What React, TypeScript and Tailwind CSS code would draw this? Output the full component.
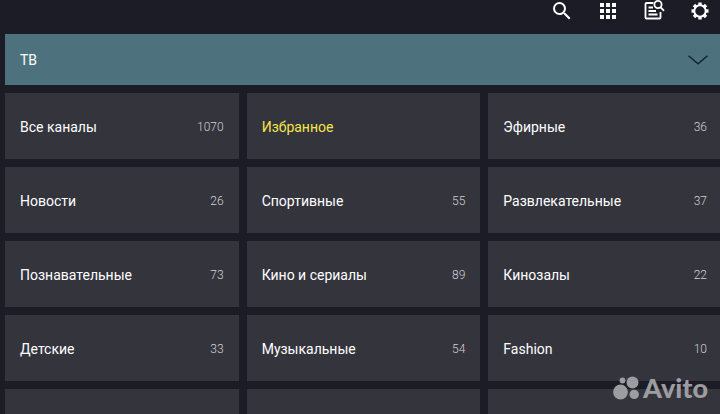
import { MdApps, MdSearch } from 'react-icons/md'

const categories = [
  { name: 'Все каналы', count: 1070 },
  { name: 'Избранное', favorite: true },
  { name: 'Эфирные', count: 36 },
  { name: 'Новости', count: 26 },
  { name: 'Спортивные', count: 55 },
  { name: 'Развлекательные', count: 37 },
  { name: 'Познавательные', count: 73 },
  { name: 'Кино и сериалы', count: 89 },
  { name: 'Кинозалы', count: 22 },
  { name: 'Детские', count: 33 },
  { name: 'Музыкальные', count: 54 },
  { name: 'Fashion', count: 10 },
  { name: '' },
  { name: '' },
  { name: '' },
]

function GuideIcon() {
  return (
    <svg viewBox="0 0 24 24" className="size-6" fill="none" stroke="currentColor" strokeWidth="1.8">
      <path d="M11.5 4H4.5q-1 0-1 1V18.5q0 1 1 1H17.5q1 0 1-1V13" />
      <path d="M6.5 8.5h4.5M6.5 12h7.5M6.5 15.5h9" />
      <circle cx="16" cy="5.5" r="3.6" />
      <path d="M18.5 8.2l3.5 3.6" />
    </svg>
  )
}

const teeth = [0, 45, 90, 135, 180, 225, 270, 315]

function GearIcon() {
  return (
    <svg viewBox="0 0 24 24" className="size-6" fill="currentColor">
      <circle cx="12" cy="12" r="5.7" fill="none" stroke="currentColor" strokeWidth="1.9" />
      {teeth.map((angle) => (
        <path key={angle} d="M10.3 6.500V3.500h3.400v3z" transform={`rotate(${angle} 12 12)`} />
      ))}
    </svg>
  )
}

function AvitoMark() {
  return (
    <div className="absolute right-3 bottom-3.5 flex items-center gap-1 text-[#9c9ca1]">
      <svg viewBox="0 0 26 24" className="h-6 w-[26px]" fill="currentColor">
        <circle cx="9.5" cy="4.5" r="2.9" />
        <circle cx="19.5" cy="6.5" r="6" />
        <circle cx="7.5" cy="16" r="7.4" />
        <circle cx="21.2" cy="18.4" r="4.7" />
      </svg>
      <span className="font-[Lato,sans-serif] text-[27px] leading-6 font-black">Avito</span>
    </div>
  )
}

export default function App() {
  return (
    <div className="relative h-screen overflow-hidden bg-[#1c1c26] pl-[5px] font-[Roboto,sans-serif] text-white">
      <header className="flex h-[34px] items-start justify-end gap-[22px] pr-2">
        <button aria-label="Поиск" className="-mt-px">
          <MdSearch className="size-6" />
        </button>
        <button aria-label="Сетка" className="-mt-px">
          <MdApps className="size-6" />
        </button>
        <button aria-label="Программа" className="-mt-px">
          <GuideIcon />
        </button>
        <button aria-label="Настройки" className="-mt-px">
          <GearIcon />
        </button>
      </header>

      <button className="flex h-[51px] w-full items-center justify-between bg-[#4d727d] pr-3 pl-[15px] text-sm">
        ТВ
        <svg viewBox="0 0 20 10" className="h-[10px] w-5" fill="none" stroke="#14222b" strokeWidth="1.5">
          <path d="M.5.8L10 8.8L19.5.8" />
        </svg>
      </button>

      <main className="mt-2 -mr-0.5 grid grid-cols-3 gap-2">
        {categories.map((category, idx) => (
          <button
            key={idx}
            className="flex h-[66px] items-center justify-between bg-[#34343d] px-[15px] pt-0.5 text-left text-sm"
          >
            <span className={category.favorite ? 'text-[#f3e64a]' : ''}>{category.name}</span>
            <span className="text-xs font-light text-[#d0d0d5]">{category.count}</span>
          </button>
        ))}
      </main>

      <AvitoMark />
    </div>
  )
}
